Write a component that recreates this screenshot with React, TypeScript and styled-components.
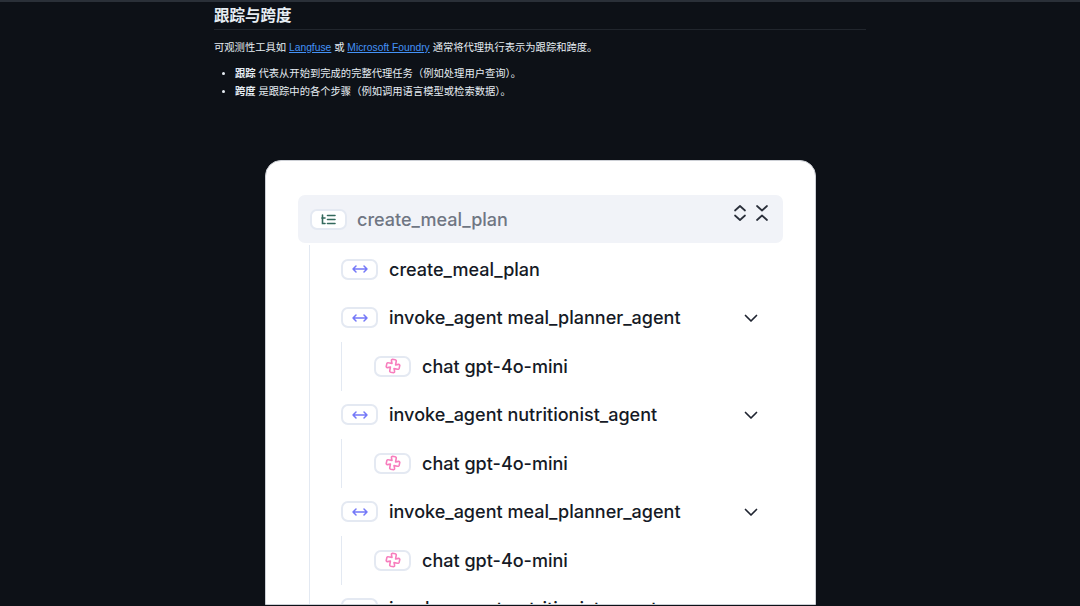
import React from "react";
import styled, { createGlobalStyle } from "styled-components";

const Global = createGlobalStyle`
  html, body { margin: 0; padding: 0; background: #0d1117; }
  body { width: 1080px; height: 606px; overflow: hidden; }
`;

const Page = styled.div`
  width: 1080px;
  height: 606px;
  overflow: hidden;
  box-sizing: border-box;
  background: #0d1117;
  border-top: 2px solid #2a3038;
`;

const Article = styled.article`
  width: 652px;
  margin-left: 214px;
  color: #e6edf3;
  font-family: "Liberation Sans", "Noto Sans CJK SC", sans-serif;
`;

const Heading = styled.h2`
  margin: 0;
  height: 27px;
  line-height: 27px;
  font-size: 15.5px;
  font-weight: 700;
  color: #e6edf3;
  border-bottom: 1px solid #21262d;
`;

const Para = styled.p`
  margin: 10px 0 0;
  font-size: 10.3px;
  line-height: 16px;
`;

const Link = styled.a`
  color: #4493f8;
  text-decoration: underline;
`;

const List = styled.ul`
  margin: 10px 0 0;
  padding-left: 21px;
  font-size: 10.3px;
  line-height: 16px;
`;

const Item = styled.li`
  margin-bottom: 2px;
`;

const Card = styled.section`
  width: 551px;
  height: 445px;
  margin: 60px 0 0 51px;
  box-sizing: border-box;
  padding: 34px 32px;
  background: #fff;
  border: 1px solid #cdd0d6;
  border-radius: 16px 16px 0 0;
  overflow: hidden;
  font-family: "Inter", sans-serif;
`;

const Header = styled.div`
  height: 48px;
  display: flex;
  align-items: center;
  gap: 10.5px;
  padding: 0 14px 0 11.5px;
  box-sizing: border-box;
  background: #f1f3f8;
  border-radius: 7px;
  color: #6f7683;
  font-size: 18.05px;
  font-weight: 500;
`;

const HeaderTools = styled.div`
  margin-left: auto;
  margin-top: -12px;
  display: flex;
  gap: 8px;
  align-items: center;
`;

const Tree = styled.div`
  margin-left: 11px;
  margin-top: 2px;
  padding-left: 31px;
  border-left: 1px solid #e3e9f2;
`;

const Row = styled.div`
  height: 48.5px;
  display: flex;
  align-items: center;
  gap: 11px;
  padding-right: 24px;
  color: #151a26;
  font-size: 18.05px;
  font-weight: 500;
`;

const Chevron = styled.span`
  margin-left: auto;
  display: flex;
`;

const Nested = styled.div`
  padding-left: 32px;
  border-left: 1px solid #e3e9f2;
`;

const Badge = styled.span`
  flex: none;
  width: 37px;
  height: 21px;
  box-sizing: border-box;
  display: flex;
  align-items: center;
  justify-content: center;
  background: #fff;
  border: 2px solid #e4e9f2;
  border-radius: 7px;
`;

const SpanIcon = () => (
  <svg width="18" height="10" viewBox="0 0 18 10" fill="none" stroke="#7478f8" strokeWidth="1.5" strokeLinecap="round" strokeLinejoin="round">
    <path d="M2 5h14M5 2 2 5l3 3M13 2l3 3-3 3" />
  </svg>
);

const TraceIcon = () => (
  <svg width="15" height="11" viewBox="0 0 15 11" fill="none" stroke="#33695c" strokeWidth="1.6" strokeLinecap="round">
    <path d="M1.5 1v8.5h2.5M.8 4h3.2M6.5 1.5h7.5M6.5 5.5h7.5M6.5 9.5h7.5" />
  </svg>
);

const GenIcon = () => (
  <svg width="16" height="16" viewBox="-8 -8 16 16" fill="none" stroke="#f77dbd" strokeWidth="1.6" strokeLinejoin="round" strokeLinecap="round">
    <path d="M-1-2.6L-1.6-5.4Q-1.8-6.6-.6-6.8L2.2-6.2Q3.6-5.8 3.2-4.6L2.6-1L5.4-1.6Q6.6-1.8 6.8-.6L6.2 2.2Q5.8 3.6 4.6 3.2L1 2.6L1.6 5.4Q1.8 6.6.6 6.8L-2.2 6.2Q-3.6 5.8-3.2 4.6L-2.6 1L-5.4 1.6Q-6.6 1.8-6.8.6L-6.2-2.2Q-5.8-3.6-4.6-3.2Z" />
  </svg>
);

const Down = () => (
  <svg width="16" height="16" viewBox="0 0 16 16" fill="none" stroke="#1f2430" strokeWidth="1.7" strokeLinecap="round" strokeLinejoin="round">
    <path d="M2.5 5.5 8 11l5.5-5.5" />
  </svg>
);

const ExpandIcon = () => (
  <svg width="14" height="18" viewBox="0 0 14 18" fill="none" stroke="#2a2f3a" strokeWidth="1.7" strokeLinecap="round" strokeLinejoin="round">
    <path d="M2 6.5 7 2l5 4.5M2 11.5 7 16l5-4.5" />
  </svg>
);

const CollapseIcon = () => (
  <svg width="14" height="18" viewBox="0 0 14 18" fill="none" stroke="#2a2f3a" strokeWidth="1.7" strokeLinecap="round" strokeLinejoin="round">
    <path d="M2 2l5 4.5L12 2M2 16l5-4.5 5 4.5" />
  </svg>
);

const agents = [
  "invoke_agent meal_planner_agent",
  "invoke_agent nutritionist_agent",
  "invoke_agent meal_planner_agent",
  "invoke_agent nutritionist_agent",
];

export default function App() {
  return (
    <Page>
      <Global />
      <Article>
        <Heading>跟踪与跨度</Heading>
        <Para>
          可观测性工具如 <Link href="#">Langfuse</Link> 或 <Link href="#">Microsoft Foundry</Link> 通常将代理执行表示为跟踪和跨度。
        </Para>
        <List>
          <Item><strong>跟踪</strong> 代表从开始到完成的完整代理任务（例如处理用户查询）。</Item>
          <Item><strong>跨度</strong> 是跟踪中的各个步骤（例如调用语言模型或检索数据）。</Item>
        </List>
        <Card>
          <Header>
            <Badge><TraceIcon /></Badge>
            create_meal_plan
            <HeaderTools><ExpandIcon /><CollapseIcon /></HeaderTools>
          </Header>
          <Tree>
            <Row><Badge><SpanIcon /></Badge>create_meal_plan</Row>
            {agents.map((name, i) => (
              <React.Fragment key={i}>
                <Row><Badge><SpanIcon /></Badge>{name}<Chevron><Down /></Chevron></Row>
                <Nested>
                  <Row><Badge><GenIcon /></Badge>chat gpt-4o-mini</Row>
                </Nested>
              </React.Fragment>
            ))}
          </Tree>
        </Card>
      </Article>
    </Page>
  );
}
